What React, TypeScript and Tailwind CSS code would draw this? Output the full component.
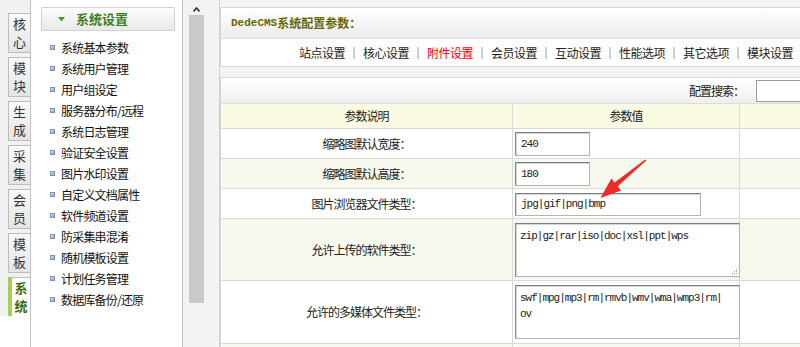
import React from 'react';

const sideTabs = ['核心', '模块', '生成', '采集', '会员', '模板', '系统'];

const menuItems = [
    '系统基本参数',
    '系统用户管理',
    '用户组设定',
    '服务器分布/远程',
    '系统日志管理',
    '验证安全设置',
    '图片水印设置',
    '自定义文档属性',
    '软件频道设置',
    '防采集串混淆',
    '随机模板设置',
    '计划任务管理',
    '数据库备份/还原',
];

const topTabs = ['站点设置', '核心设置', '附件设置', '会员设置', '互动设置', '性能选项', '其它选项', '模块设置'];

const cn = { fontFamily: '"Noto Sans CJK SC", "DejaVu Sans", sans-serif' };
const mono = { fontFamily: '"Liberation Mono", "Noto Sans CJK SC", monospace' };

const inputCls =
    'block border border-[#b4b4b4] border-t-[#7d7d7d] border-l-[#8a8a8a] bg-white shadow-[inset_1px_1px_0_#d6d6d6] text-[11px] tracking-[-1px] text-[#222]';

type Row = { label: string; h: string; bg: string; field: React.ReactNode };

const rows: Row[] = [
    {
        label: '缩略图默认宽度：',
        h: 'h-[30px]',
        bg: 'bg-white',
        field: <div className={`${inputCls} mt-[3px] w-[75px] h-[24px] pl-[5px] leading-[22px]`} style={mono}>240</div>,
    },
    {
        label: '缩略图默认高度：',
        h: 'h-[30px]',
        bg: 'bg-[#f7f8ee]',
        field: <div className={`${inputCls} mt-[3px] w-[75px] h-[24px] pl-[5px] leading-[22px]`} style={mono}>180</div>,
    },
    {
        label: '图片浏览器文件类型：',
        h: 'h-[30px]',
        bg: 'bg-white',
        field: <div className={`${inputCls} mt-[4px] w-[186px] h-[23px] pl-[5px] leading-[21px]`} style={mono}>jpg|gif|png|bmp</div>,
    },
    {
        label: '允许上传的软件类型：',
        h: 'h-[62px]',
        bg: 'bg-[#f7f8ee]',
        field: (
            <div className={`${inputCls} relative mt-[4px] w-[225px] h-[54px] pl-[4px] pt-[4px] leading-[16px]`} style={mono}>
                zip|gz|rar|iso|doc|xsl|ppt|wps
                <div className="absolute right-[2px] bottom-[2px] grid grid-cols-3 gap-[1px]">
                    <span className="w-[1px] h-[1px]" />
                    <span className="w-[1px] h-[1px]" />
                    <span className="w-[1px] h-[1px] bg-[#999]" />
                    <span className="w-[1px] h-[1px]" />
                    <span className="w-[1px] h-[1px] bg-[#999]" />
                    <span className="w-[1px] h-[1px] bg-[#999]" />
                    <span className="w-[1px] h-[1px] bg-[#999]" />
                    <span className="w-[1px] h-[1px] bg-[#999]" />
                    <span className="w-[1px] h-[1px] bg-[#999]" />
                </div>
            </div>
        ),
    },
    {
        label: '允许的多媒体文件类型：',
        h: 'h-[63px]',
        bg: 'bg-white',
        field: (
            <div className={`${inputCls} mt-[4px] w-[225px] h-[54px] pl-[4px] pt-[4px] leading-[16px]`} style={mono}>
                <div>swf|mpg|mp3|rm|rmvb|wmv|wma|wmp3|rm|</div>
                <div>ov</div>
            </div>
        ),
    },
    {
        label: '',
        h: 'h-[20px]',
        bg: 'bg-[#f7f8ee]',
        field: null,
    },
];

export default function App() {
    return (
        <div className="relative w-[800px] h-[347px] overflow-hidden flex bg-white text-[#222]" style={cn}>
            {/* left vertical tabs */}
            <div className="w-[30px] shrink-0 flex flex-col">
                <div className="h-[316px] bg-[#f1f1f1] pl-[8px] pt-[13px] flex flex-col gap-[4px] overflow-hidden">
                    {sideTabs.map((t, i) => {
                        const active = i === sideTabs.length - 1;
                        return (
                            <div
                                key={t}
                                className={`h-[40px] shrink-0 border border-[#bcbcbc] border-r-0 flex flex-col items-center justify-center gap-[2px] text-[13px] leading-[16px] ${
                                    active
                                        ? 'bg-white border-l-[4px] border-l-[#a6cf4f] text-[#3d6a0f] font-bold'
                                        : 'bg-gradient-to-b from-[#fbfbfb] to-[#e4e4e4] text-[#333]'
                                }`}
                            >
                                <span>{t[0]}</span>
                                <span>{t[1]}</span>
                            </div>
                        );
                    })}
                </div>
            </div>

            {/* menu panel */}
            <div className="w-[153px] shrink-0 border-l border-r border-[#c4c4c4] bg-white">
                <div className="mt-[7px] ml-[10px] w-[134px] h-[24px] border border-[#d3d3d3] bg-gradient-to-b from-[#fcfcfc] to-[#e9e9e9] flex items-center pl-[16px]">
                    <svg width="7" height="5" viewBox="0 0 7 5" className="mr-[11px]">
                        <polygon points="0,0 7,0 3.5,4.5" fill="#4f9a2a" />
                    </svg>
                    <span className="text-[13px] font-bold text-[#3f7f1e]">系统设置</span>
                </div>
                <div className="pt-[6px] pl-[19px]">
                    {menuItems.map((m) => (
                        <div key={m} className="h-[21px] flex items-center">
                            <span className="w-[5px] h-[5px] mr-[6px] border border-[#7f93b8] bg-gradient-to-br from-[#dfe9f8] to-[#7d9bd0]" />
                            <span className="text-[12px] tracking-[-0.8px] text-[#111]">{m}</span>
                        </div>
                    ))}
                </div>
            </div>

            {/* scrollbar strip */}
            <div className="w-[36px] shrink-0 bg-[#f3f3f3] pl-[6px] pt-[4px]">
                <div className="w-[15px] h-[11px] flex items-center justify-center">
                    <svg width="7" height="5" viewBox="0 0 7 5">
                        <polyline points="0.5,4.5 3.5,1 6.5,4.5" fill="none" stroke="#333" strokeWidth="1.6" />
                    </svg>
                </div>
                <div className="w-[15px] h-[288px] bg-[#c9c9c9]" />
            </div>

            {/* main */}
            <div className="flex-1 bg-[#f4f4f4] pt-[7px] border-l border-[#cfcfcf]">
                <div className="border border-r-0 border-[#d6d6d6] bg-white">
                    <div className="h-[30px] bg-gradient-to-b from-white to-[#ececec] flex items-center pl-[10px] text-[12px] font-bold text-[#666600]">
                        <span style={mono} className="text-[11px]">DedeCMS</span>
                        <span>系统配置参数：</span>
                    </div>
                    <div className="h-[28px] border-t border-[#dcdcdc] flex items-center justify-end pr-[7px] text-[12px] tracking-[-0.5px]">
                        {topTabs.map((t, i) => (
                            <React.Fragment key={t}>
                                {i > 0 && <span className="mx-[8px] w-[2px] h-[12px] bg-gradient-to-r from-[#e7d6a6] to-[#b9c9e3]" />}
                                <span className={i === 2 ? 'text-[#ff0000]' : 'text-[#222]'}>{t}</span>
                            </React.Fragment>
                        ))}
                    </div>
                </div>

                <div className="mt-[10px] border border-r-0 border-[#d6d6d6] bg-white">
                    <div className="h-[26px] bg-gradient-to-b from-white to-[#eeeeee] border-b border-[#dcdcdc] flex items-center justify-end text-[12px] tracking-[-1px]">
                        <span className="mr-[12px]">配置搜索：</span>
                        <div className="w-[44px] h-[22px] border border-[#9a9a9a] border-r-0 bg-white" />
                    </div>

                    <div className="h-[25px] flex bg-[#fbfbe4] border-b border-[#dadada] text-[12px] tracking-[-1px]">
                        <div className="w-[292px] border-r border-[#dadada] flex items-center justify-center">参数说明</div>
                        <div className="w-[227px] border-r border-[#dadada] flex items-center justify-center">参数值</div>
                        <div className="flex-1" />
                    </div>

                    {rows.map((r, i) => (
                        <div key={i} className={`${r.h} flex ${r.bg} border-b border-[#dadada] text-[12px] tracking-[-1px]`}>
                            <div className="w-[292px] border-r border-[#dadada] flex items-center justify-center">{r.label}</div>
                            <div className="w-[227px] border-r border-[#dadada] pl-[2px]">{r.field}</div>
                            <div className="flex-1" />
                        </div>
                    ))}
                </div>
            </div>

            {/* red annotation arrow */}
            <svg className="absolute left-0 top-0 pointer-events-none" width="800" height="347" viewBox="0 0 800 347">
                <polygon
                    points="600.5,198 621,190.5 617.8,186.3 646.2,160.6 645.2,159.4 614.6,182.6 611.4,178.4"
                    fill="#ee2a24"
                />
            </svg>
        </div>
    );
}
